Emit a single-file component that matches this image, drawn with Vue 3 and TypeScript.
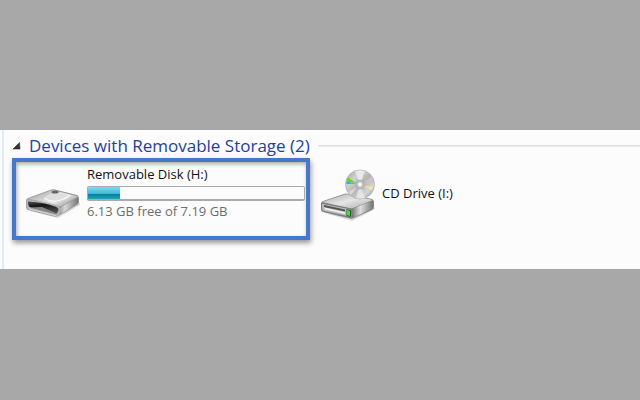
<script setup lang="ts">
import { computed, ref } from 'vue'

const open = ref(true)
const capacity = 7.19
const free = 6.13
const usedPercent = computed(() => ((capacity - free) / capacity) * 100 + '%')
</script>

<template>
  <main class="page">
    <section class="panel">
      <h2 class="heading">
        <button class="toggle" type="button" :aria-expanded="open" @click="open = !open">
          <svg class="arrow" viewBox="0 0 8 8" aria-hidden="true">
            <path d="M6.500 .5 7 7H0Z" fill="#333" stroke="#333" stroke-width=".6" stroke-linejoin="round" />
          </svg>
          <span>Devices with Removable Storage (2)</span>
        </button>
      </h2>
      <div v-show="open" class="devices">
        <article class="device selected">
          <svg class="disk" viewBox="0 0 56 32" aria-hidden="true">
            <defs>
              <linearGradient id="diskTop" x1="0" y1="0" x2="1" y2=".6">
                <stop offset="0" stop-color="#8a8a8a" />
                <stop offset=".35" stop-color="#c4c4c4" />
                <stop offset=".7" stop-color="#ececec" />
                <stop offset="1" stop-color="#a4a4a4" />
              </linearGradient>
              <linearGradient id="diskSide" x1="0" y1="0" x2="1" y2="0">
                <stop offset="0" stop-color="#8a8a8a" />
                <stop offset=".35" stop-color="#d8d8d8" />
                <stop offset="1" stop-color="#777" />
              </linearGradient>
              <linearGradient id="diskMouth" x1="0" y1="0" x2=".3" y2="1">
                <stop offset="0" stop-color="#555" />
                <stop offset=".4" stop-color="#161616" />
                <stop offset="1" stop-color="#4a4a4a" />
              </linearGradient>
            </defs>
            <path d="M5 24 33 31 55 18 54 14 30 25Z" fill="#000" opacity=".13" />
            <path d="M1 14Q1 12 3 11L25 3Q27 2 30 2.500L52 8Q54 9 54 11V15Q54 17 52 18L35 28Q32 30 29 29.500L3 23Q1 22 1 20Z" fill="#959595" />
            <path d="M2 12 26 3.500Q28 3 30 3.500L53 9.500 37 19Q35 20 32 18.500 20 14.500 2 12Z" fill="url(#diskTop)" />
            <path d="M36 20 53 10.500V15Q53 16.500 51 17.500L35 27.500 33 28.500Z" fill="url(#diskSide)" />
            <path d="M1.500 12.500Q20 14 31 18.500 36 20 35.500 23L34 28Q32 30 29 29L4 22.500Q1.500 22 1.500 19Z" fill="#b4b4b4" />
            <path d="M3 14.500Q20 15.500 30 19.500 34 21 33.500 23L32 26.500 6 20.500Q3 20 3 14.500Z" fill="url(#diskMouth)" />
            <path d="M5 20.500 17 20 32 26.500 31 27.500Z" fill="#858585" />
            <path d="M4 22 31 28.500" fill="none" stroke="#e0e0e0" stroke-width=".8" />
            <path d="M19 11.500 24 7 30 5 39 7 45 8.500Q42 12 37 13.500L31 14.500Z" fill="#dedede" />
            <path d="M19 11.500Q27 15.500 34 13.500T45 8.500" fill="none" stroke="#fafafa" stroke-width="1.200" />
            <ellipse cx="30" cy="5" rx="3.500" ry="1.500" fill="#666" />
          </svg>
          <div class="details">
            <div id="disk-name" class="name">Removable Disk (H:)</div>
            <div class="bar" role="img" aria-labelledby="disk-name disk-space">
              <div class="used" :style="{ width: usedPercent }"></div>
            </div>
            <div id="disk-space" class="space">{{ free }} GB free of {{ capacity }} GB</div>
          </div>
        </article>
        <article class="device">
          <svg class="cd" viewBox="0 0 56 54" aria-hidden="true">
            <defs>
              <linearGradient id="cdFace" x1="0" y1="0" x2="1" y2="1">
                <stop offset="0" stop-color="#a0a0a0" />
                <stop offset=".3" stop-color="#d2d2d2" />
                <stop offset=".5" stop-color="#b4b4b4" />
                <stop offset=".75" stop-color="#d4d4d4" />
                <stop offset="1" stop-color="#8c8c8c" />
              </linearGradient>
              <linearGradient id="driveTop" x1="0" y1="0" x2="1" y2="1">
                <stop offset="0" stop-color="#aaa" />
                <stop offset=".5" stop-color="#e6e6e6" />
                <stop offset="1" stop-color="#aaa" />
              </linearGradient>
              <linearGradient id="driveSide" x1="0" y1="0" x2="1" y2="0">
                <stop offset="0" stop-color="#777" />
                <stop offset=".4" stop-color="#e0e0e0" />
                <stop offset="1" stop-color="#777" />
              </linearGradient>
            </defs>
            <path d="M4 44 32 52 55 40 53 36 30 47Z" fill="#000" opacity=".13" />
            <path d="M1 35Q1 33 3 32L24 25Q26 24 29 25L52 30Q54 31 54 33V38Q54 40 52 41L34 49Q32 50 30 49.500L3 43Q1 42.500 1 40Z" fill="#858585" />
            <path d="M2 33 25 25.500Q27 25 29 25.500L53 31 33 39Q31 39.500 29 39Z" fill="url(#driveTop)" />
            <path d="M33 39.500 53 31.500V37.500Q53 39 51 40L35 48 32 48.500Z" fill="url(#driveSide)" />
            <path d="M1.500 34 31 40 32 48.500 4 42.500Q1.500 42 1.500 39Z" fill="#b9b9b9" stroke="#6c6c6c" stroke-width=".7" />
            <path d="M4 36 25 40.500V42.500L4 38Z" fill="#555" />
            <path d="M4 38.500 25 43.200V45L5 40.500Z" fill="#f2f2f2" />
            <path d="M26.500 40 31 41V48L26.500 47Z" fill="#28612a" />
            <path d="M27 41 30 42V47L27 46Z" fill="#3fe02b" />
            <circle cx="40" cy="15.500" r="14.500" fill="url(#cdFace)" stroke="#aaa" stroke-width=".7" />
            <path d="M40 15.500 35 2Q40 .3 45 2Z" fill="#f7f7f7" opacity=".7" />
            <path d="M40 15.500 36 29Q41 30 45 29Z" fill="#f5f5f5" opacity=".6" />
            <path d="M36 14 28 8.500 26.500 12.500Z" fill="#62d51c" />
            <path d="M36 14.500 26.500 12.500V15Z" fill="#21b5d4" />
            <path d="M43 14 52 8 53 11Z" fill="#dfb9cf" />
            <path d="M43.500 17 53.500 17.500 52 21.500Z" fill="#eee5a1" />
            <path d="M37 18 28.500 23 31 26Z" fill="#e5d4df" />
            <circle cx="40" cy="15.500" r="4.300" fill="#c6c6c6" stroke="#989898" stroke-width=".7" />
            <circle cx="40" cy="15.500" r="2.400" fill="#f8f8f8" stroke="#aaa" stroke-width=".6" />
          </svg>
          <div class="name">CD Drive (I:)</div>
        </article>
      </div>
    </section>
  </main>
</template>

<style>
body {
  margin: 0;
}
</style>

<style scoped>
.page {
  box-sizing: border-box;
  min-height: 100vh;
  padding-bottom: 2px;
  display: flex;
  flex-direction: column;
  justify-content: center;
  background: #a8a8a8;
  font-family: "Open Sans", "Noto Sans", sans-serif;
}
.panel {
  padding: 4px 0 29px 9px;
  background: linear-gradient(90deg, #fcfcfc 2px, #dcebf7 2px, #dcebf7 4px, #fcfcfc 4px);
}
.heading {
  display: flex;
  align-items: center;
  gap: 8px;
  margin: 0;
  font-size: 17px;
  font-weight: 400;
  line-height: 24px;
}
.heading::after {
  content: "";
  flex: 1;
  height: 2px;
  background: linear-gradient(#dedede 50%, #eee 50%);
}
.toggle {
  display: flex;
  align-items: center;
  gap: 8px;
  padding: 0 0 0 4px;
  border: 0;
  background: none;
  color: #24409c;
  font: inherit;
  white-space: nowrap;
}
.arrow {
  width: 8px;
  height: 8px;
}
.devices {
  display: flex;
  align-items: stretch;
  gap: 10px;
  padding-left: 3px;
}
.device {
  box-sizing: border-box;
  display: flex;
  align-items: center;
  gap: 6px;
  padding-bottom: 6px;
}
.selected {
  width: 298px;
  padding: 2px 1px 17px 9px;
  border: 4px solid #4777cb;
  box-shadow: 1px 3px 5px #0006, inset 1px 2px 4px #0005;
}
.disk {
  flex: none;
  width: 56px;
  height: 32px;
  align-self: end;
}
.cd {
  flex: none;
  width: 56px;
  height: 54px;
}
.cd + .name {
  padding-bottom: 6px;
}
.details {
  flex: 1;
}
.name {
  color: #111;
  font-size: 13px;
  line-height: 20px;
  white-space: nowrap;
}
.bar {
  box-sizing: border-box;
  height: 15px;
  margin: 2px 0;
  overflow: hidden;
  border: 1px solid #aaa;
  border-bottom-width: 2px;
  border-radius: 2px;
  background: #fcfcfc;
}
.used {
  height: 100%;
  background: linear-gradient(#7fdcf0, #3cb9d8 55%, #087f9b 60%, #18a7bd);
}
.space {
  color: #6c6c6c;
  font-size: 13px;
  line-height: 16px;
}
</style>
